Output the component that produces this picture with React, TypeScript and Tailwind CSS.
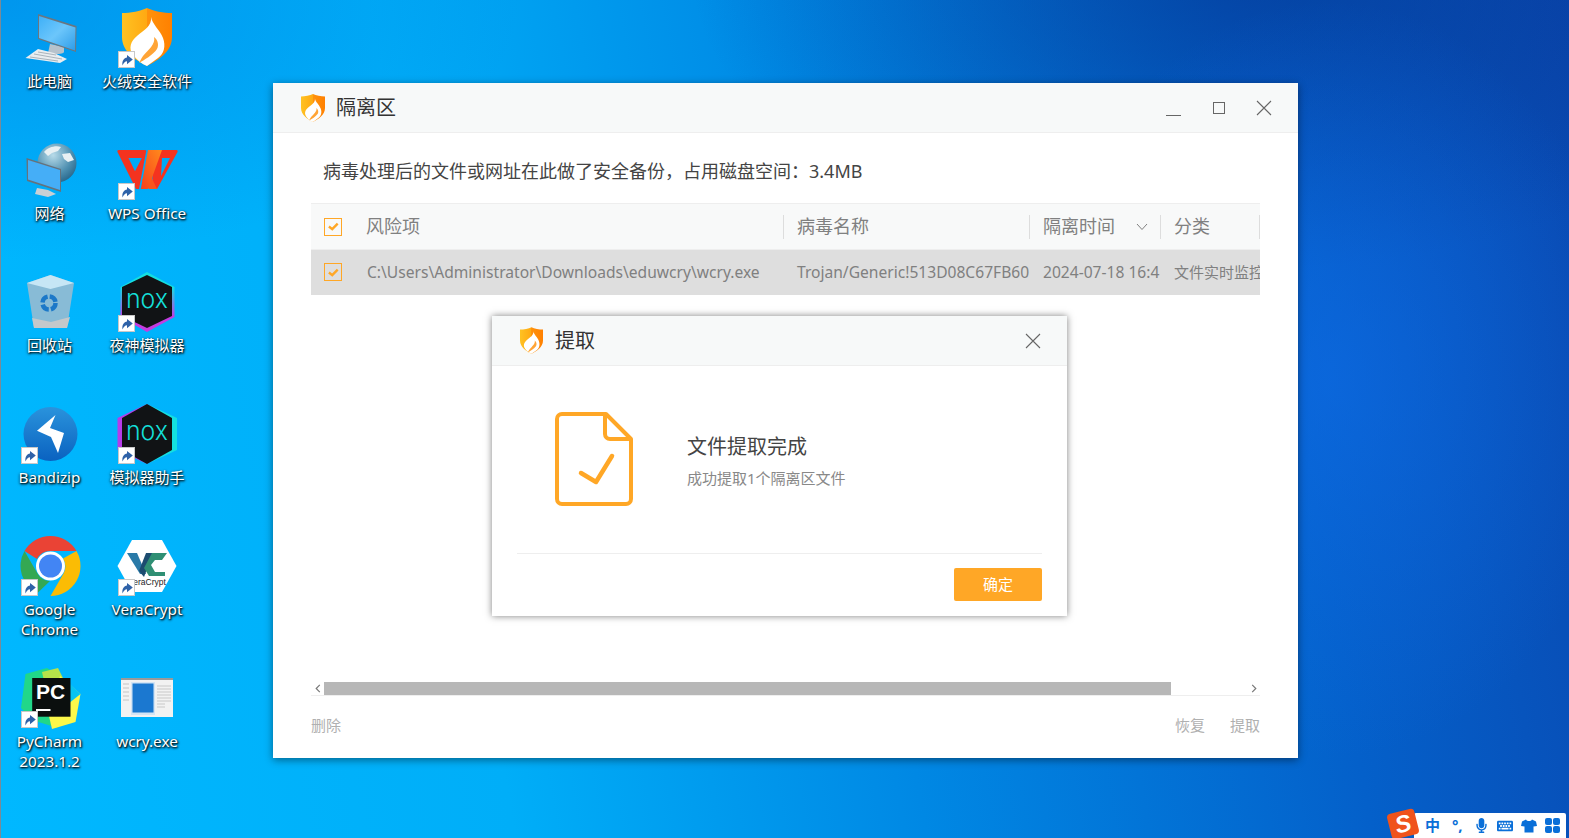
import { FaMicrophone, FaKeyboard } from 'react-icons/fa'
import type { ReactNode } from 'react'

const cjk = "font-['Noto_Sans','Noto_Sans_CJK_SC',sans-serif]"

function FlameShield({ id, className }: { id: string; className: string }) {
  return (
    <svg viewBox="0 0 50 58" className={className}>
      <defs>
        <linearGradient id={id} x1="0" y1="0" x2="1" y2="0">
          <stop offset="0" stopColor="#ffc222" />
          <stop offset="0.5" stopColor="#ffa912" />
          <stop offset="0.5" stopColor="#ff920c" />
          <stop offset="1" stopColor="#ff8000" />
        </linearGradient>
      </defs>
      <path d="M25 0C19 3 8 5 0 5V29C0 44 14 52 25 58C36 52 50 44 50 29V5C42 5 31 3 25 0Z" fill={`url(#${id})`} />
      <path d="M29 9C30 16 38 22 41 30C44 38 42 46 36 50L25 58C20 56 15 52 11 47C6 40 9 33 15 28C22 22 30 18 29 9Z" fill="#fff" />
      <path d="M32 29C34 36 26 42 21 48C19 51 18 53 17 55C22 52 31 47 35 41C37 37 36 32 32 29Z" fill="#ffa436" />
    </svg>
  )
}

function ShortcutBadge() {
  return (
    <span className="absolute left-[3px] top-[43px] flex h-[17px] w-[17px] items-center justify-center border border-[#c8c8c8] bg-white">
      <svg viewBox="0 0 15 15" className="h-[15px] w-[15px]">
        <path d="M3.5 13.5C2.8 9 5 6 8 5.6V3L13.8 7.6L8 12.2V9.2C6 9.2 4.6 10.8 3.5 13.5Z" fill="#2f62a8" />
      </svg>
    </span>
  )
}

const iconBox = 'absolute left-0 top-0 h-[63px] w-[64px]'

const PcIcon = () => (
  <svg viewBox="0 0 64 63" className={iconBox}>
    <defs>
      <linearGradient id="pcScreen" x1="0" y1="0" x2="1" y2="1">
        <stop offset="0" stopColor="#3eb0f8" />
        <stop offset="0.5" stopColor="#6cc6fb" />
        <stop offset="1" stopColor="#2d9ce8" />
      </linearGradient>
    </defs>
    <path d="M32 36L46 39V44C46 46 36 47 30 45Z" fill="#b6c2cc" />
    <path d="M20 6L58.5 18L58 44L20 31Z" fill="#6a7680" />
    <path d="M21 8L57.5 19.5L57 42.5L21 30Z" fill="url(#pcScreen)" />
    <path d="M20 41L36 45L49 51L42 55L7.5 50Z" fill="#e9edf0" />
    <path d="M12 49L40 53M16 46L44 51M20 44L38 47" stroke="#aab4bc" strokeWidth="1" />
  </svg>
)

const NetIcon = () => (
  <svg viewBox="0 0 64 63" className={iconBox}>
    <defs>
      <radialGradient id="globe" cx="0.4" cy="0.3" r="0.8">
        <stop offset="0" stopColor="#b8dbe9" />
        <stop offset="0.6" stopColor="#4e8fb0" />
        <stop offset="1" stopColor="#1f5d82" />
      </radialGradient>
    </defs>
    <circle cx="39" cy="23" r="19.5" fill="url(#globe)" />
    <path d="M26 12C30 7 38 5 43 7L40 11L34 13L30 16ZM44 14L52 13L56 20L50 22L46 19Z" fill="#e8f0f3" />
    <path d="M8.5 18L43 29V52L9 41Z" fill="#66727c" />
    <path d="M10 20L42 30V50L10 39.5Z" fill="#45aef7" />
    <path d="M19 48L30 50L38 54L30 57L17 54Z" fill="#c9d0d5" />
  </svg>
)

const BinIcon = () => (
  <svg viewBox="0 0 64 63" className={iconBox}>
    <path d="M9 11L32.5 3L56 11L49 56H16Z" fill="#8fbcd4" fillOpacity="0.95" />
    <path d="M9 11L32.5 3L56 11L32.5 17Z" fill="#c6e6f5" />
    <path d="M14 46L33 50L52 45L49 56H16Z" fill="#c4c8cb" />
    <circle cx="31" cy="31" r="6.5" fill="none" stroke="#1c78c8" strokeWidth="4.5" strokeDasharray="8 2.2" />
  </svg>
)

const BandizipIcon = () => (
  <svg viewBox="0 0 64 63" className={iconBox}>
    <defs>
      <linearGradient id="bz" x1="0" y1="0" x2="0" y2="1">
        <stop offset="0" stopColor="#2a93dc" />
        <stop offset="1" stopColor="#0a62c0" />
      </linearGradient>
    </defs>
    <circle cx="32.5" cy="30" r="27" fill="url(#bz)" />
    <path d="M37.5 11L19 26.7L33 33L40 49L46 29L32 24Z" fill="#fff" />
  </svg>
)

const ChromeIcon = () => (
  <svg viewBox="0 0 64 63" className={iconBox}>
    <path d="M32.5 0A30 30 0 0 1 58.5 15H32.5A15 15 0 0 0 19 23L6.5 15A30 30 0 0 1 32.5 0Z" fill="#ea4335" />
    <path d="M6.5 15L19.5 37.5A15 15 0 0 0 32 45L19.5 57A30 30 0 0 1 6.5 15Z" fill="#34a853" />
    <path d="M58.5 15A30 30 0 0 1 32.5 60L45.5 37.5A15 15 0 0 0 45 22.5Z" fill="#fbbc04" />
    <circle cx="32.5" cy="30" r="14.5" fill="#fff" />
    <circle cx="32.5" cy="30" r="11.5" fill="#4285f4" />
  </svg>
)

const PyCharmIcon = () => (
  <svg viewBox="0 0 64 63" className={iconBox}>
    <path d="M7.5 6L29 0L42 8L40 60L14 52L3 40Z" fill="#21d789" />
    <path d="M24 4L40 0L46 12L30 30Z" fill="#b6e34a" />
    <path d="M42 8L62.5 26L57.5 54L34 61L30 44Z" fill="#fcf84a" />
    <path d="M50 14L62.5 26L50 36Z" fill="#07c3f2" />
    <rect x="14.2" y="10" width="38.3" height="38.7" fill="#0b0f0e" />
    <text x="18" y="31" fontFamily="Liberation Sans" fontWeight="700" fontSize="21" fill="#fff">PC</text>
    <rect x="18" y="41" width="14.5" height="2" fill="#fff" />
  </svg>
)

const SecurityIcon = () => (
  <div className={iconBox}>
    <FlameShield id="fsDesk" className="absolute left-[7px] top-0 h-[58px] w-[50px]" />
  </div>
)

const WpsIcon = () => (
  <svg viewBox="0 0 64 63" className={iconBox}>
    <defs>
      <linearGradient id="wpsA" x1="1" y1="0" x2="0" y2="1">
        <stop offset="0" stopColor="#ff8a1c" />
        <stop offset="1" stopColor="#f8401c" />
      </linearGradient>
    </defs>
    <path fillRule="evenodd" d="M3.5 10H30C31 10 31.5 11 31 12L24 49H21L2.5 12C2 11 2.5 10 3.5 10ZM13.5 18L20 31.3L26.8 18Z" fill="#f4331f" />
    <path fillRule="evenodd" d="M36 10H61.5C62.5 10 63 11 62.5 12L42 49H38ZM47 18L46 36L55 18Z" fill="#f4331f" />
    <path d="M27 40L33 30L42 49H34Z" fill="#f9541c" />
    <path d="M33 10H47L33 49H25.8Z" fill="url(#wpsA)" />
  </svg>
)

function NoxIcon({ flip }: { flip?: boolean }) {
  const id = flip ? 'noxEdgeB' : 'noxEdgeA'
  return (
    <svg viewBox="0 0 64 63" className={iconBox}>
      <defs>
        {flip ? (
          <linearGradient id={id} x1="0" y1="0" x2="1" y2="0">
            <stop offset="0.4" stopColor="#b63ce8" />
            <stop offset="0.6" stopColor="#14e0e0" />
          </linearGradient>
        ) : (
          <linearGradient id={id} x1="0.5" y1="0" x2="0.5" y2="1">
            <stop offset="0.25" stopColor="#14e0e0" />
            <stop offset="0.75" stopColor="#c43ce0" />
          </linearGradient>
        )}
      </defs>
      {flip ? (
        <path d="M32 0L62 14V46L32 60L2.5 46V14Z" fill={`url(#${id})`} />
      ) : (
        <path d="M32 0L59.5 15V45L32 60L5.5 45V15Z" fill={`url(#${id})`} />
      )}
      <path d={flip ? 'M32 0L57 14V46L32 60L7 46V14Z' : 'M32 3L57 15V44L32 56L7 44V15Z'} fill="#111315" />
      <text x="32" y="36" textAnchor="middle" fontFamily="Inter" fontWeight="300" fontSize="26" textLength="42" lengthAdjust="spacingAndGlyphs" fill="#14dfd8">nox</text>
    </svg>
  )
}

const VeraIcon = () => (
  <svg viewBox="0 0 64 63" className={iconBox}>
    <path d="M2.5 30L17 4H47L61.5 30L47 56H17Z" fill="#fff" />
    <path d="M12 17H22L31 38H25Z" fill="#2a7aa8" />
    <path d="M24 35L31 17H38L29 41Z" fill="#1c4c70" />
    <path d="M37 17H52L47 24H40L36 29L40 36H50V40H34L29 32Z" fill="#2f8f74" />
    <text x="32" y="49" textAnchor="middle" fontFamily="Liberation Sans" fontSize="8.5" fill="#222">VeraCrypt</text>
  </svg>
)

const ExeIcon = () => (
  <svg viewBox="0 0 64 63" className={iconBox}>
    <rect x="6" y="10" width="52" height="39" fill="#f2f2f2" />
    <rect x="6" y="10" width="52" height="2" fill="#9a9a9a" />
    <rect x="16" y="14" width="24" height="33" fill="#d4e4f4" />
    <rect x="17.5" y="15.5" width="21" height="29" fill="#1b78d0" />
    <path d="M42 18H56M42 21H56M42 24H56M42 27H56M42 30H56M42 33H56M42 36H50M42 39H50" stroke="#c8c8c8" />
    <path d="M8 16H14M8 20H14M8 24H14M8 28H14M8 32H14" stroke="#c4c4c4" />
  </svg>
)

const desktopItems: { label: string; icon: ReactNode; shortcut: boolean; latin?: boolean }[] = [
  { label: '此电脑', icon: <PcIcon />, shortcut: false },
  { label: '火绒安全软件', icon: <SecurityIcon />, shortcut: true },
  { label: '网络', icon: <NetIcon />, shortcut: false },
  { label: 'WPS Office', icon: <WpsIcon />, shortcut: true, latin: true },
  { label: '回收站', icon: <BinIcon />, shortcut: false },
  { label: '夜神模拟器', icon: <NoxIcon />, shortcut: true },
  { label: 'Bandizip', icon: <BandizipIcon />, shortcut: true, latin: true },
  { label: '模拟器助手', icon: <NoxIcon flip />, shortcut: true },
  { label: 'Google Chrome', icon: <ChromeIcon />, shortcut: true, latin: true },
  { label: 'VeraCrypt', icon: <VeraIcon />, shortcut: true, latin: true },
  { label: 'PyCharm 2023.1.2', icon: <PyCharmIcon />, shortcut: true, latin: true },
  { label: 'wcry.exe', icon: <ExeIcon />, shortcut: false, latin: true },
]

function DesktopItem({ label, icon, shortcut, latin }: { label: string; icon: ReactNode; shortcut: boolean; latin?: boolean }) {
  return (
    <div className="flex h-[132px] flex-col items-center">
      <div className="relative h-[63px] w-[64px] shrink-0">
        {icon}
        {shortcut && <ShortcutBadge />}
      </div>
      <span className={`${latin ? 'text-[15.3px]' : 'text-[15px]'} w-[92px] text-center leading-[20px] text-white [text-shadow:1px_1px_2px_#000,0_1px_3px_rgba(0,0,0,0.8)]`}>
        {label}
      </span>
    </div>
  )
}

function Checkbox() {
  return (
    <span className="flex h-[18px] w-[18px] items-center justify-center border-[1.5px] border-[#ffa726]">
      <svg viewBox="0 0 18 18" className="h-[15px] w-[15px]">
        <path d="M3.5 9L7.5 12.2L14 5.5" fill="none" stroke="#ffa726" strokeWidth="2.8" />
      </svg>
    </span>
  )
}

function CloseGlyph() {
  return (
    <svg viewBox="0 0 16 16" className="h-[16px] w-[16px]">
      <path d="M1 1L15 15M15 1L1 15" stroke="#666" strokeWidth="1.1" />
    </svg>
  )
}

const colClass = 'grid grid-cols-[473px_246px_131px_99px]'

function QuarantineWindow() {
  return (
    <div className="absolute left-[273px] top-[83px] flex h-[675px] w-[1025px] flex-col bg-white shadow-[0_2px_8px_rgba(0,0,0,0.45)]">
      <div className="flex h-[50px] shrink-0 items-center border-b border-[#eeeeee] bg-[#f7f9f9] pl-[28px]">
        <FlameShield id="fsMain" className="h-[28px] w-[24px]" />
        <span className="ml-[11px] text-[20px] text-[#333]">隔离区</span>
        <div className="ml-auto flex items-center">
          <svg viewBox="0 0 16 16" className="h-[16px] w-[16px]">
            <path d="M0 15.5H15" stroke="#666" strokeWidth="1" />
          </svg>
          <span className="ml-[31px] h-[12px] w-[12px] border border-[#666]" />
          <span className="ml-[31px] mr-[26px]">
            <CloseGlyph />
          </span>
        </div>
      </div>

      <div className="flex flex-1 flex-col px-[38px]">
        <p className="pl-[12px] pt-[24px] text-[18px] leading-[28px] text-[#444]">病毒处理后的文件或网址在此做了安全备份，占用磁盘空间：3.4MB</p>

        <div className="mt-[18px] w-[949px] text-[#808080]">
          <div className={`${colClass} h-[47px] items-center border-y border-[#eeeeee] bg-[#f8f9f9] text-[18px]`}>
            <div className="flex h-[24px] items-center border-r border-[#dddddd]">
              <span className="ml-[13px] mr-[24px]">
                <Checkbox />
              </span>
              风险项
            </div>
            <div className="flex h-[24px] items-center border-r border-[#dddddd] pl-[13px]">病毒名称</div>
            <div className="flex h-[24px] items-center border-r border-[#dddddd] pl-[13px]">
              隔离时间
              <svg viewBox="0 0 12 8" className="ml-[21px] h-[8px] w-[12px]">
                <path d="M1 1L6 6.5L11 1" fill="none" stroke="#808080" strokeWidth="1" />
              </svg>
            </div>
            <div className="flex h-[24px] items-center border-r border-[#dddddd] pl-[13px]">分类</div>
          </div>
          <div className={`${colClass} h-[45px] items-center bg-[#dedede] text-[15.6px] whitespace-nowrap`}>
            <div className="flex items-center overflow-hidden">
              <span className="ml-[13px] mr-[25px]">
                <Checkbox />
              </span>
              C:\Users\Administrator\Downloads\eduwcry\wcry.exe
            </div>
            <div className="overflow-hidden pl-[13px]">Trojan/Generic!513D08C67FB60</div>
            <div className="overflow-hidden pl-[13px]">2024-07-18 16:4</div>
            <div className="overflow-hidden pl-[13px] text-[15px]">文件实时监控</div>
          </div>
        </div>

        <div className="mt-auto flex h-[14px] w-[949px] items-stretch border-b border-[#eeeeee]">
          <span className="flex w-[13px] items-center justify-center">
            <svg viewBox="0 0 6 10" className="h-[9px] w-[6px]">
              <path d="M5 1L1 5L5 9" fill="none" stroke="#777" strokeWidth="1.3" />
            </svg>
          </span>
          <span className="w-[847px] bg-[#b7b7b7]" />
          <span className="ml-auto flex w-[13px] items-center justify-center">
            <svg viewBox="0 0 6 10" className="h-[9px] w-[6px]">
              <path d="M1 1L5 5L1 9" fill="none" stroke="#777" strokeWidth="1.3" />
            </svg>
          </span>
        </div>

        <div className="flex h-[62px] w-[949px] shrink-0 items-center pb-[3px] text-[15px] text-[#b0b0b0]">
          <span>删除</span>
          <span className="ml-auto">恢复</span>
          <span className="ml-[25px]">提取</span>
        </div>
      </div>
    </div>
  )
}

function ExtractDialog() {
  return (
    <div className="absolute left-[492px] top-[316px] flex h-[300px] w-[575px] flex-col bg-white shadow-[0_0_7px_rgba(0,0,0,0.5)]">
      <div className="flex h-[50px] shrink-0 items-center border-b border-[#eeeeee] bg-[#f7f9f9] pl-[28px]">
        <FlameShield id="fsDialog" className="h-[27px] w-[23px]" />
        <span className="ml-[12px] text-[20px] text-[#333]">提取</span>
        <span className="ml-auto mr-[26px]">
          <CloseGlyph />
        </span>
      </div>

      <div className="mx-[25px] flex h-[188px] shrink-0 items-start border-b border-[#eeeeee] pl-[38px] pt-[46px]">
        <svg viewBox="0 0 78 94" className="h-[94px] w-[78px] shrink-0">
          <path d="M7 2H51L76 27V87A5 5 0 0 1 71 92H7A5 5 0 0 1 2 87V7A5 5 0 0 1 7 2Z" fill="none" stroke="#ffa726" strokeWidth="4" strokeLinejoin="round" />
          <path d="M50 3V22A5 5 0 0 0 55 27H75" fill="none" stroke="#ffa726" strokeWidth="4" />
          <path d="M26 61L41 70L57 44" fill="none" stroke="#ffa726" strokeWidth="4.5" strokeLinecap="round" strokeLinejoin="round" />
        </svg>
        <div className="ml-[54px] pt-[20px]">
          <div className="text-[20px] leading-[30px] text-[#444]">文件提取完成</div>
          <div className="mt-[5px] text-[15px] leading-[22px] text-[#888]">成功提取1个隔离区文件</div>
        </div>
      </div>

      <div className="flex flex-1 items-start justify-end pr-[25px] pt-[14px]">
        <button className="h-[33px] w-[88px] rounded-[2px] bg-[#ffa726] text-[15px] text-white">确定</button>
      </div>
    </div>
  )
}

function ImeBar() {
  return (
    <div className="absolute bottom-0 right-[3px] flex items-end">
      <div className="relative z-10 mb-[1px] flex h-[26px] w-[28px] rotate-[-14deg] items-center justify-center rounded-[4px] bg-[#f0531c]">
        <span className="font-['Liberation_Sans',sans-serif] text-[24px] leading-[26px] font-bold italic text-white">S</span>
      </div>
      <div className="ml-[-3px] flex h-[25px] w-[152px] items-center rounded-t-[2px] bg-white pl-[11px] text-[#0a6fd8]">
        <span className="w-[24px] text-[15px] leading-none font-bold">中</span>
        <span className="w-[24px] pl-[3px] text-[15px] leading-none font-bold">°,</span>
        <span className="w-[24px] pl-[1px]">
          <FaMicrophone size={15} />
        </span>
        <span className="w-[24px]">
          <FaKeyboard size={16} />
        </span>
        <svg viewBox="0 0 16 16" className="h-[16px] w-[16px]">
          <path d="M5 1.5L1 3.5L0 8L3.5 8.5V14.5H12.5V8.5L16 8L15 3.5L11 1.5C10 3.5 6 3.5 5 1.5Z" fill="currentColor" />
        </svg>
        <span className="ml-[8px] grid grid-cols-2 gap-[1px]">
          <span className="h-[7px] w-[7px] rounded-[2px] bg-[#0a6fd8]" />
          <span className="h-[7px] w-[7px] rounded-[2px] bg-[#0a6fd8]" />
          <span className="h-[7px] w-[7px] rounded-[2px] bg-[#0a6fd8]" />
          <span className="h-[7px] w-[7px] rounded-[2px] bg-[#0a6fd8]" />
        </span>
      </div>
    </div>
  )
}

export default function App() {
  return (
    <div
      className={`${cjk} relative h-[838px] w-[1569px] overflow-hidden shadow-[inset_1px_0_0_#7a8a96] bg-[radial-gradient(ellipse_300px_380px_at_1330px_380px,rgba(16,110,235,0.55),transparent),radial-gradient(ellipse_560px_300px_at_1250px_-30px,rgba(4,50,140,0.6),transparent),radial-gradient(ellipse_520px_260px_at_0px_0px,rgba(0,125,225,0.55),transparent),linear-gradient(80deg,#00b8ff_0%,#00aef8_30%,#0088e4_54%,#0460ca_80%,#0a48b0_100%)]`}
    >
      <div className="grid w-[196px] grid-cols-[97px_98px] pl-[1px] pt-[8px]">
        {desktopItems.map((item) => (
          <DesktopItem key={item.label} {...item} />
        ))}
      </div>
      <QuarantineWindow />
      <ExtractDialog />
      <ImeBar />
    </div>
  )
}
